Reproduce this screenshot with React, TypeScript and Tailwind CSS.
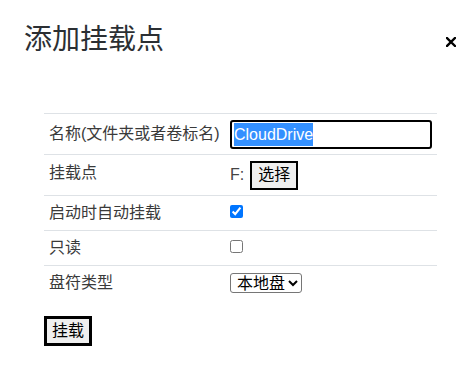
import { useState } from "react";

const font = { fontFamily: '"Liberation Sans", "Noto Sans CJK SC", sans-serif' };

function CloseIcon() {
  return (
    <svg width="10" height="10" viewBox="0 0 10 10" className="block">
      <path d="M1 1L9 9M9 1L1 9" stroke="#000" strokeWidth="2.4" strokeLinecap="square" />
    </svg>
  );
}

export default function App() {
  const [autoMount, setAutoMount] = useState(true);
  const [readOnly, setReadOnly] = useState(false);

  return (
    <div className="w-[475px] h-[374px] bg-white text-[#212529]" style={font}>
      <div className="flex items-start justify-between pl-[24px] pr-[19px] pt-[23px]">
        <h4 className="text-[28px] leading-[34px] font-normal text-[#2b2f33]">添加挂载点</h4>
        <button className="mt-[14px] p-0">
          <CloseIcon />
        </button>
      </div>

      <div className="ml-[44px] mt-[56px] w-[393px] text-[16px] text-[#3a3a3a]">
        <div className="flex h-[41px] items-center border-t border-[#dee2e6]">
          <div className="w-[186px] pl-[5px]">名称(文件夹或者卷标名)</div>
          <div className="flex h-[29px] w-[202px] items-center rounded-[3px] border-2 border-black pl-[2px]">
            <span className="bg-[#3390ff] text-[16px] leading-[23px] text-white">CloudDrive</span>
          </div>
        </div>

        <div className="flex h-[41px] items-center border-t border-[#dee2e6]">
          <div className="w-[186px] pl-[5px] -mt-[4px]">挂载点</div>
          <div className="flex items-center gap-[6px]">
            <span className="text-[16px] text-[#444]">F:</span>
            <button className="h-[29px] w-[48px] border-2 border-black bg-[#efefef] text-[16px] text-black">
              选择
            </button>
          </div>
        </div>

        <div className="flex h-[35px] items-center border-t border-[#dee2e6]">
          <div className="w-[186px] pl-[5px]">启动时自动挂载</div>
          <input
            type="checkbox"
            checked={autoMount}
            onChange={(e) => setAutoMount(e.target.checked)}
            className="m-0 -mt-[3px] h-[13px] w-[13px]"
          />
        </div>

        <div className="flex h-[35px] items-center border-t border-[#dee2e6]">
          <div className="w-[186px] pl-[5px]">只读</div>
          <input
            type="checkbox"
            checked={readOnly}
            onChange={(e) => setReadOnly(e.target.checked)}
            className="m-0 -mt-[3px] h-[13px] w-[13px]"
          />
        </div>

        <div className="flex h-[35px] items-center border-t border-[#dee2e6]">
          <div className="w-[186px] pl-[5px]">盘符类型</div>
          <select className="h-[20px] w-[72px] rounded-[3px] border border-[#767676] bg-white pl-[2px] text-[16px] leading-[18px] text-black">
            <option>本地盘</option>
            <option>可移动盘</option>
          </select>
        </div>
      </div>

      <button className="ml-[44px] mt-[16px] h-[30px] w-[48px] border-[3px] border-black bg-[#efefef] text-[16px] text-black">
        挂载
      </button>
    </div>
  );
}
